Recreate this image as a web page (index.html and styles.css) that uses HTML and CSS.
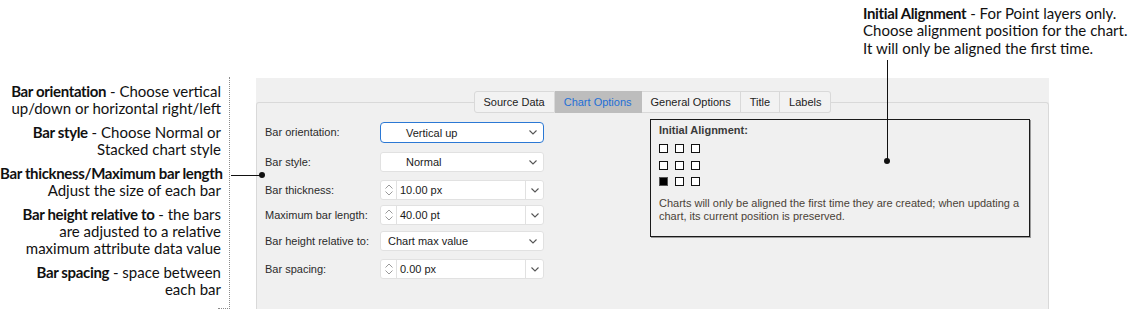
FILE: index.html
```html
<!DOCTYPE html>
<html lang="en">
<head>
  <meta charset="UTF-8" />
  <title>Chart Options</title>
  <link rel="stylesheet" href="styles.css">
</head>
<body>
  <div class="page">
    <aside class="notes">
      <p><b>Bar orientation</b> - Choose vertical<br>up/down or horizontal right/left</p>
      <p><b>Bar style</b> - Choose Normal or<br>Stacked chart style</p>
      <p><b>Bar thickness/Maximum bar length</b><br>Adjust the size of each bar</p>
      <p><b>Bar height relative to</b> - the bars<br>are adjusted to a relative<br>maximum attribute data value</p>
      <p><b>Bar spacing</b> - space between<br>each bar</p>
    </aside>

    <main class="side">
      <p class="top-note"><b>Initial Alignment</b> - For Point layers only.<br>Choose alignment position for the chart.<br>It will only be aligned the first time.</p>

      <section class="dialog">
        <nav class="tabs">
          <span class="tab">Source Data</span>
          <span class="tab active">Chart Options</span>
          <span class="tab">General Options</span>
          <span class="tab">Title</span>
          <span class="tab">Labels</span>
        </nav>

        <div class="pane">
          <div class="form">
            <label>Bar orientation:</label>
            <div class="combo focus indent">Vertical up
              <svg class="chev" width="8" height="5" viewBox="0 0 8 5"><path d="M0.5 0.5 L4 4 L7.5 0.5" /></svg>
            </div>

            <label>Bar style:</label>
            <div class="combo indent">Normal
              <svg class="chev" width="8" height="5" viewBox="0 0 8 5"><path d="M0.5 0.5 L4 4 L7.5 0.5" /></svg>
            </div>

            <label>Bar thickness:</label>
            <div class="spin">
              <span class="spin-arrows">
                <svg width="8" height="12" viewBox="0 0 8 12"><path d="M0.5 4.5 L4 1 L7.5 4.5 M0.5 7.5 L4 11 L7.5 7.5" /></svg>
              </span>
              <span class="spin-value">10.00 px</span>
              <span class="spin-drop"><svg class="chev" width="8" height="5" viewBox="0 0 8 5"><path d="M0.5 0.5 L4 4 L7.5 0.5" /></svg></span>
            </div>

            <label>Maximum bar length:</label>
            <div class="spin">
              <span class="spin-arrows">
                <svg width="8" height="12" viewBox="0 0 8 12"><path d="M0.5 4.5 L4 1 L7.5 4.5 M0.5 7.5 L4 11 L7.5 7.5" /></svg>
              </span>
              <span class="spin-value">40.00 pt</span>
              <span class="spin-drop"><svg class="chev" width="8" height="5" viewBox="0 0 8 5"><path d="M0.5 0.5 L4 4 L7.5 0.5" /></svg></span>
            </div>

            <label>Bar height relative to:</label>
            <div class="combo">Chart max value
              <svg class="chev" width="8" height="5" viewBox="0 0 8 5"><path d="M0.5 0.5 L4 4 L7.5 0.5" /></svg>
            </div>

            <label>Bar spacing:</label>
            <div class="spin">
              <span class="spin-arrows">
                <svg width="8" height="12" viewBox="0 0 8 12"><path d="M0.5 4.5 L4 1 L7.5 4.5 M0.5 7.5 L4 11 L7.5 7.5" /></svg>
              </span>
              <span class="spin-value">0.00 px</span>
              <span class="spin-drop"><svg class="chev" width="8" height="5" viewBox="0 0 8 5"><path d="M0.5 0.5 L4 4 L7.5 0.5" /></svg></span>
            </div>
          </div>

          <div class="align-box">
            <h4>Initial Alignment:</h4>
            <div class="align-grid">
              <span></span><span></span><span></span>
              <span></span><span></span><span></span>
              <span class="on"></span><span></span><span></span>
            </div>
            <p>Charts will only be aligned the first time they are created; when updating a<br>chart, its current position is preserved.</p>
          </div>
        </div>
      </section>
    </main>

    <span class="pointer pointer-left"></span>
    <span class="pointer pointer-top"></span>
  </div>
</body>
</html>
```

FILE: styles.css
```css
  body {
    margin: 0;
    background: #fff;
    font-family: "Liberation Sans", Arial, sans-serif;
  }

  .page {
    position: relative;
    display: flex;
    align-items: flex-start;
    width: 1137px;
    height: 323px;
  }

  /* callout texts */
  .notes {
    position: relative;
    width: 221px;
    height: 226px;
    margin-top: 77px;
    padding: 6px 8px 0 0;
    border-right: 1px dotted #8a8a8a;
    display: flex;
    flex-direction: column;
    gap: 7px;
    text-align: right;
    font-family: Lato, "Open Sans", sans-serif;
    font-size: 15px;
    line-height: 17px;
    color: #111;
  }

  .notes::after {
    content: "";
    position: absolute;
    right: -1px;
    bottom: 0;
    width: 12px;
    border-bottom: 1px dotted #8a8a8a;
  }

  .notes p,
  .top-note {
    margin: 0;
    white-space: nowrap;
  }

  .notes b,
  .top-note b {
    font-family: Lato, sans-serif;
    font-size: 15px;
    font-weight: bold;
    letter-spacing: -0.35px;
  }

  .side {
    width: 793px;
    margin-left: 26px;
  }

  .top-note {
    height: 52px;
    padding: 5px 0 0 607px;
    font-family: Lato, "Open Sans", sans-serif;
    font-size: 15px;
    line-height: 17.4px;
    color: #111;
  }

  /* dialog */
  .dialog {
    height: 218px;
    margin-top: 21px;
    padding-top: 13px;
    background: #f0f0f0;
    font-size: 11px;
    color: #222;
  }

  .tabs {
    position: relative;
    z-index: 2;
    display: flex;
    justify-content: center;
    height: 22px;
  }

  .tab {
    display: flex;
    align-items: center;
    padding: 0 9px;
    border: 1px solid #d9d9d9;
    border-left: none;
    background: #f2f2f2;
  }

  .tab:first-child {
    border-left: 1px solid #d9d9d9;
    border-radius: 3px 0 0 3px;
  }

  .tab:last-child {
    border-radius: 0 3px 3px 0;
  }

  .tab.active {
    background: #bdbdbd;
    color: #1f6fd6;
    border-color: #bdbdbd;
  }

  .pane {
    display: flex;
    align-items: flex-start;
    height: 190px;
    margin-top: -11px;
    padding: 16px 0 0 8px;
    border: 1px solid #d9d9d9;
    border-bottom: none;
    border-radius: 3px 3px 0 0;
  }

  .form {
    display: grid;
    grid-template-columns: 115px 164px;
    grid-template-rows: 30px 28px 25px 26px 28px 21px;
    margin-top: 3px;
    color: #2b2b2b;
  }

  .form label {
    line-height: 20px;
  }

  .combo,
  .spin {
    position: relative;
    display: flex;
    align-items: center;
    height: 20px;
    box-sizing: border-box;
    background: #fff;
    border: 1px solid #e1e1e1;
    border-radius: 3px;
    color: #1a1a1a;
  }

  .combo {
    padding-left: 7px;
  }

  .combo.indent {
    padding-left: 25px;
  }

  .combo.focus {
    height: 21px;
    border-color: #2b78d4;
    border-radius: 4px;
  }

  .chev {
    fill: none;
    stroke: #555;
    stroke-width: 1.1;
  }

  .combo .chev {
    margin-left: auto;
    margin-right: 6px;
  }

  .spin-arrows {
    display: flex;
    align-items: center;
    justify-content: center;
    width: 15px;
    height: 100%;
    border-right: 1px solid #e1e1e1;
  }

  .spin-arrows path {
    fill: none;
    stroke: #9a9a9a;
    stroke-width: 1;
  }

  .spin-value {
    flex: 1;
    padding-left: 3px;
  }

  .spin-drop {
    display: flex;
    align-items: center;
    justify-content: center;
    width: 17px;
    height: 100%;
    border-left: 1px solid #e1e1e1;
  }

  /* initial alignment box */
  .align-box {
    width: 362px;
    height: 116px;
    margin-left: 106px;
    padding: 0 8px;
    border: 1px solid #1a1a1a;
    box-shadow: 1px 1px 0 #9a9a9a;
  }

  .align-box h4 {
    margin: 3px 0 0;
    font-size: 11px;
    line-height: 14px;
    color: #3a3a3a;
  }

  .align-grid {
    display: grid;
    grid-template-columns: repeat(3, 9px);
    grid-auto-rows: 9px;
    column-gap: 7px;
    row-gap: 7.5px;
    margin-top: 7px;
  }

  .align-grid span {
    box-sizing: border-box;
    border: 1px solid #111;
    background: #fff;
  }

  .align-grid span.on {
    background: #000;
    border-color: #555;
  }

  .align-box p {
    margin: 11px 0 0;
    line-height: 13px;
    color: #4a4237;
  }

  /* pointer lines */
  .pointer {
    position: absolute;
    background: #111;
  }

  .pointer::after {
    content: "";
    position: absolute;
    width: 6px;
    height: 6px;
    border-radius: 50%;
    background: #111;
  }

  .pointer-left {
    left: 231px;
    top: 175px;
    width: 31px;
    height: 1px;
  }

  .pointer-left::after {
    right: -3px;
    top: -3px;
  }

  .pointer-top {
    left: 887px;
    top: 60px;
    width: 1px;
    height: 101px;
  }

  .pointer-top::after {
    left: -3px;
    bottom: -3px;
  }
```
